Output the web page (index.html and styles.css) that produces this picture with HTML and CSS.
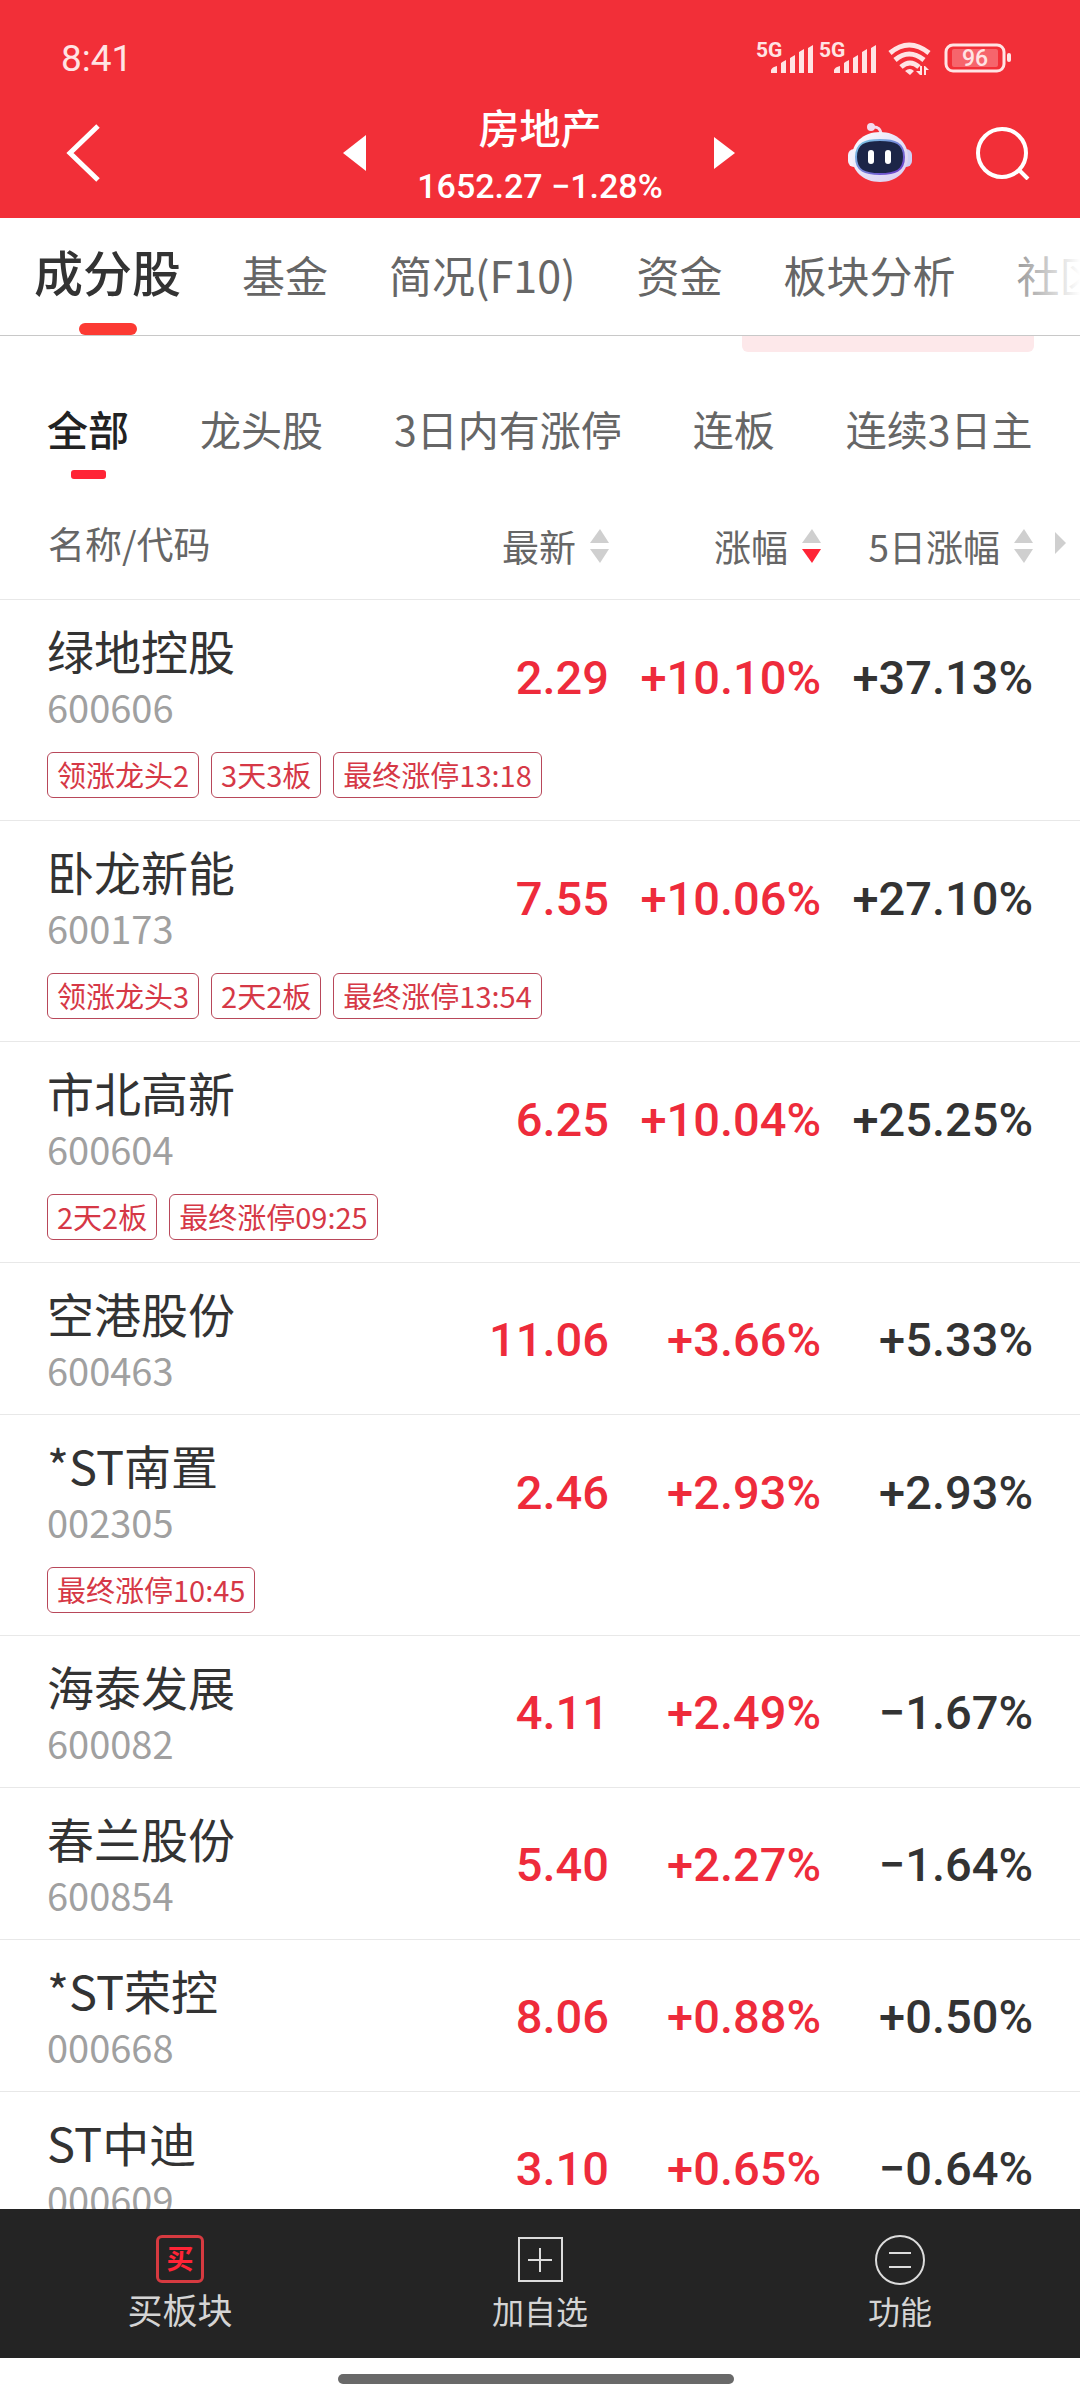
FILE: index.html
```html
<!DOCTYPE html>
<html lang="zh-CN">
<head>
    <meta charset="UTF-8">
    <meta name="viewport" content="width=device-width, initial-scale=1.0">
    <title>房地产</title>
    <link rel="stylesheet" href="styles.css">
</head>
<body>

    <header class="header">
        <div class="status-bar">
            <span class="time">8:41</span>
            <svg class="status-icons" width="256" height="44" viewBox="0 -4 256 44" fill="#ffe4e4">
                <!-- signal 1 -->
                <text class="network" x="0" y="17">5G</text>
                <path d="M15 33v-3q1-3 6-4v7zM25 33V23q1-1 5-3v13zM34 33V18l5-3v18zM43 33V12l5-3v24zM52 33V8l5-3v28z"/>
                <!-- signal 2 -->
                <text class="network" x="63" y="17">5G</text>
                <path d="M78 33v-3q1-3 6-4v7zM88 33V23q1-1 5-3v13zM97 33V18l5-3v18zM106 33V12l5-3v24zM115 33V8l5-3v28z"/>
                <!-- wifi -->
                <g fill="none" stroke="#ffe4e4" stroke-width="5">
                    <path d="M134 13q19-16 39 0"/>
                    <path d="M139 20q14-12 29 0"/>
                    <path d="M145 27q9-8 18 0"/>
                </g>
                <path d="M149 31q5-4 9 0l-4 4zM164 26h2v9h-2l-4-4h4zM168 35v-9h1l4 4h-3v5z"/>
                <!-- battery -->
                <rect x="190" y="5" width="58" height="26" rx="7" fill="none" stroke="#ffe4e4" stroke-width="3"/>
                <rect x="196" y="9" width="46" height="18" rx="2" fill-opacity="0.3"/>
                <rect x="251" y="13" width="4" height="9" rx="2"/>
                <text class="battery-level" x="219" y="26" text-anchor="middle">96</text>
            </svg>
        </div>
        <div class="toolbar">
            <button class="icon-btn back" type="button" aria-label="返回">
                <svg width="36" height="58" viewBox="0 0 36 58" fill="none" stroke="#fff" stroke-width="5">
                    <path d="M33 2L5 29l28 27"/>
                </svg>
            </button>
            <div class="switcher">
                <button class="icon-btn" type="button" aria-label="上一个">
                    <svg width="23" height="36" viewBox="0 0 23 36" fill="#fff"><path d="M23 0v36L0 18z"/></svg>
                </button>
                <div class="sector">
                    <h1>房地产</h1>
                    <p>1652.27 −1.28%</p>
                </div>
                <button class="icon-btn" type="button" aria-label="下一个">
                    <svg width="21" height="32" viewBox="0 0 21 32" fill="#fff"><path d="M0 0v32l21-16z"/></svg>
                </button>
            </div>
            <div class="actions">
                <button class="icon-btn" type="button" aria-label="智能助手">
                    <svg width="64" height="60" viewBox="0 0 64 60">
                        <defs>
                            <linearGradient id="shell" x1="0" y1="0" x2="1" y2="1">
                                <stop offset="0" stop-color="#fff"/>
                                <stop offset="0.5" stop-color="#e6e2f8"/>
                                <stop offset="1" stop-color="#d9cdf0"/>
                            </linearGradient>
                            <linearGradient id="rim" x1="0" y1="0" x2="1" y2="1">
                                <stop offset="0" stop-color="#7fd0e8"/>
                                <stop offset="1" stop-color="#6a35c8"/>
                            </linearGradient>
                        </defs>
                        <path d="M24 4q9-1 9 8" fill="none" stroke="#f3dcee" stroke-width="3"/>
                        <circle cx="23" cy="4" r="4" fill="#f3dcee"/>
                        <rect x="0" y="26" width="12" height="18" rx="6" fill="#f6f0fb"/>
                        <rect x="52" y="26" width="12" height="18" rx="6" fill="#cfd0f5"/>
                        <path d="M32 9c17 0 28 11 28 25S49 59 32 59 4 48 4 34 15 9 32 9z" fill="url(#shell)"/>
                        <path d="M32 17c15 0 24 3 24 17S47 51 32 51 8 48 8 34s9-17 24-17z" fill="#1c2547" stroke="url(#rim)" stroke-width="2"/>
                        <rect x="20" y="27" width="6" height="14" rx="3" fill="#fff"/>
                        <rect x="37" y="27" width="6" height="14" rx="3" fill="#fff"/>
                    </svg>
                </button>
                <button class="icon-btn" type="button" aria-label="搜索">
                    <svg width="54" height="54" viewBox="0 0 54 54" fill="none" stroke="#fff" stroke-width="4">
                        <circle cx="26" cy="27" r="24"/>
                        <path d="M42 43l10 10"/>
                    </svg>
                </button>
            </div>
        </div>
    </header>

    <nav class="tabs">
        <a class="active" href="#">成分股</a>
        <a href="#">基金</a>
        <a href="#">简况(F10)</a>
        <a href="#">资金</a>
        <a href="#">板块分析</a>
        <a href="#">社区</a>
    </nav>

    <main class="content">
        <div class="banner-edge"></div>

        <nav class="filters">
            <a class="active" href="#">全部</a>
            <a href="#">龙头股</a>
            <a href="#">3日内有涨停</a>
            <a href="#">连板</a>
            <a href="#">连续3日主</a>
        </nav>

        <table class="stocks">
            <colgroup>
                <col>
                <col class="col-price">
                <col class="col-change">
                <col class="col-change">
                <col class="col-more">
            </colgroup>
            <thead>
                <tr>
                    <th class="name">名称/代码</th>
                    <th>
                        <button class="sort" type="button">最新
                            <svg width="19" height="34" viewBox="0 0 19 34" fill="#cfcfcf"><path d="M0 14h19L10 0z"/><path d="M0 20h19l-9 14z"/></svg>
                        </button>
                    </th>
                    <th>
                        <button class="sort" type="button">涨幅
                            <svg width="19" height="34" viewBox="0 0 19 34" fill="#cfcfcf"><path d="M0 14h19L10 0z"/><path d="M0 20h19l-9 14z" fill="#ff2436"/></svg>
                        </button>
                    </th>
                    <th>
                        <button class="sort" type="button">5日涨幅
                            <svg width="19" height="34" viewBox="0 0 19 34" fill="#cfcfcf"><path d="M0 14h19L10 0z"/><path d="M0 20h19l-9 14z"/></svg>
                        </button>
                    </th>
                    <th class="more">
                        <svg width="11" height="22" viewBox="0 0 11 22" fill="#cfcfcf"><path d="M0 0v22l11-11z"/></svg>
                    </th>
                </tr>
            </thead>
            <tbody>
                <tr>
                    <td class="name"><strong>绿地控股</strong><small>600606</small></td>
                    <td class="up">2.29</td>
                    <td class="up">+10.10%</td>
                    <td>+37.13%</td>
                    <td></td>
                </tr>
                <tr class="tag-row">
                    <td colspan="5"><div class="tags"><span>领涨龙头2</span><span>3天3板</span><span>最终涨停13:18</span></div></td>
                </tr>
            </tbody>
            <tbody>
                <tr>
                    <td class="name"><strong>卧龙新能</strong><small>600173</small></td>
                    <td class="up">7.55</td>
                    <td class="up">+10.06%</td>
                    <td>+27.10%</td>
                    <td></td>
                </tr>
                <tr class="tag-row">
                    <td colspan="5"><div class="tags"><span>领涨龙头3</span><span>2天2板</span><span>最终涨停13:54</span></div></td>
                </tr>
            </tbody>
            <tbody>
                <tr>
                    <td class="name"><strong>市北高新</strong><small>600604</small></td>
                    <td class="up">6.25</td>
                    <td class="up">+10.04%</td>
                    <td>+25.25%</td>
                    <td></td>
                </tr>
                <tr class="tag-row">
                    <td colspan="5"><div class="tags"><span>2天2板</span><span>最终涨停09:25</span></div></td>
                </tr>
            </tbody>
            <tbody>
                <tr>
                    <td class="name"><strong>空港股份</strong><small>600463</small></td>
                    <td class="up">11.06</td>
                    <td class="up">+3.66%</td>
                    <td>+5.33%</td>
                    <td></td>
                </tr>
            </tbody>
            <tbody>
                <tr>
                    <td class="name"><strong>*ST南置</strong><small>002305</small></td>
                    <td class="up">2.46</td>
                    <td class="up">+2.93%</td>
                    <td>+2.93%</td>
                    <td></td>
                </tr>
                <tr class="tag-row">
                    <td colspan="5"><div class="tags"><span>最终涨停10:45</span></div></td>
                </tr>
            </tbody>
            <tbody>
                <tr>
                    <td class="name"><strong>海泰发展</strong><small>600082</small></td>
                    <td class="up">4.11</td>
                    <td class="up">+2.49%</td>
                    <td>−1.67%</td>
                    <td></td>
                </tr>
            </tbody>
            <tbody>
                <tr>
                    <td class="name"><strong>春兰股份</strong><small>600854</small></td>
                    <td class="up">5.40</td>
                    <td class="up">+2.27%</td>
                    <td>−1.64%</td>
                    <td></td>
                </tr>
            </tbody>
            <tbody>
                <tr>
                    <td class="name"><strong>*ST荣控</strong><small>000668</small></td>
                    <td class="up">8.06</td>
                    <td class="up">+0.88%</td>
                    <td>+0.50%</td>
                    <td></td>
                </tr>
            </tbody>
            <tbody>
                <tr>
                    <td class="name"><strong>ST中迪</strong><small>000609</small></td>
                    <td class="up">3.10</td>
                    <td class="up">+0.65%</td>
                    <td>−0.64%</td>
                    <td></td>
                </tr>
            </tbody>
        </table>
    </main>

    <footer class="bottom-bar">
        <button class="buy" type="button">
            <span class="buy-icon">买</span>
            买板块
        </button>
        <button type="button">
            <svg width="50" height="50" viewBox="0 0 50 50" fill="none" stroke="#dcdcdc" stroke-width="2">
                <rect x="4" y="3" width="43" height="43"/>
                <path d="M25 13v24M13 25h24"/>
            </svg>
            加自选
        </button>
        <button type="button">
            <svg width="50" height="50" viewBox="0 0 50 50" fill="none" stroke="#dcdcdc" stroke-width="2">
                <circle cx="25" cy="25" r="24"/>
                <path d="M14 18h22M14 32h22"/>
            </svg>
            功能
        </button>
    </footer>
    <div class="home-indicator"><span></span></div>

</body>
</html>
```
FILE: styles.css
```css
* {
    margin: 0;
    padding: 0;
    box-sizing: border-box;
}

body {
    font-family: 'Noto Sans CJK SC', sans-serif;
    display: flex;
    flex-direction: column;
    height: 100vh;
    overflow: hidden;
    background-color: #fff;
    color: #333;
}

a {
    color: inherit;
    text-decoration: none;
}

button {
    font-family: inherit;
    font-size: inherit;
    font-weight: inherit;
    color: inherit;
    background: none;
    border: none;
    cursor: pointer;
}

svg {
    display: block;
}

/* Header */
.header {
    background-color: #f22f38;
    color: #fff;
    flex-shrink: 0;
}

.status-bar {
    display: flex;
    justify-content: space-between;
    align-items: center;
    height: 88px;
    padding: 28px 68px 0 61px;
}

.time {
    font-family: Roboto, sans-serif;
    font-size: 37px;
    color: #ffe4e4;
}

.network {
    font-family: Roboto, sans-serif;
    font-size: 21px;
    font-weight: 700;
}

.battery-level {
    font-family: Roboto, sans-serif;
    font-size: 23px;
    font-weight: 500;
}

.toolbar {
    display: grid;
    grid-template-columns: 1fr 392px 1fr;
    align-items: center;
    height: 130px;
    padding: 0 50px 0 48px;
}

.back {
    justify-self: start;
    padding-left: 17px;
}

.switcher {
    display: flex;
    justify-content: space-between;
    align-items: center;
}

.sector {
    padding-top: 6px;
    text-align: center;
    line-height: 60px;
}

.sector h1 {
    font-size: 41px;
    font-weight: 500;
}

.sector p {
    font-family: Roboto, sans-serif;
    font-size: 34px;
    font-weight: 500;
}

.actions {
    display: flex;
    justify-content: flex-end;
    align-items: center;
    gap: 64px;
}

/* Tabs */
.tabs {
    display: flex;
    flex-shrink: 0;
    gap: 61px;
    height: 118px;
    padding-left: 34px;
    border-bottom: 1px solid #c8c8c8;
    font-size: 43px;
    line-height: 112px;
    color: #666;
    white-space: nowrap;
    overflow: hidden;
    position: relative;
}

.tabs::after {
    content: "";
    position: absolute;
    top: 0;
    right: 0;
    width: 96px;
    height: 100%;
    background: linear-gradient(to right, rgba(255, 255, 255, 0), #fff);
}

.tabs a,
.filters a {
    display: flex;
    flex-direction: column;
    align-items: center;
    justify-content: space-between;
    flex-shrink: 0;
}

.tabs .active {
    font-size: 49px;
    font-weight: 500;
    line-height: 105px;
    color: #333;
}

.tabs .active::after {
    content: "";
    width: 58px;
    height: 12px;
    border-radius: 6px;
    background-color: #fc3a33;
}

/* Content */
.content {
    flex: 1;
    min-height: 0;
    overflow: hidden;
}

.banner-edge {
    width: 27%;
    height: 16px;
    margin: 0 46px 0 auto;
    border-radius: 0 0 6px 6px;
    background-color: #fde8ea;
}

.filters {
    display: flex;
    gap: 71px;
    height: 138px;
    margin: 0 46px 0 47px;
    padding: 42px 0 11px;
    font-size: 41px;
    line-height: 68px;
    color: #666;
    white-space: nowrap;
    overflow: hidden;
}

.filters .active {
    font-weight: 500;
    color: #222;
}

.filters .active::after {
    content: "";
    width: 35px;
    height: 9px;
    border-radius: 3px;
    background-color: #ff2436;
}

/* Stock table */
.stocks {
    width: 100%;
    table-layout: fixed;
    border-collapse: separate;
    border-spacing: 0;
}

.col-price {
    width: 212px;
}

.col-change {
    width: 212px;
}

.col-more {
    width: 47px;
}

.stocks th {
    height: 110px;
    padding-bottom: 3px;
    font-size: 37px;
    font-weight: 400;
    color: #666;
    text-align: right;
    white-space: nowrap;
    border-bottom: 1px solid #e8e8e8;
}

.stocks th.name {
    padding-left: 48px;
    text-align: left;
}

.stocks th.more {
    padding-left: 22px;
}

.sort {
    display: inline-flex;
    align-items: center;
    gap: 14px;
    vertical-align: middle;
}

.stocks td {
    height: 152px;
    padding-top: 2px;
    font-family: Roboto, sans-serif;
    font-size: 47px;
    font-weight: 500;
    text-align: right;
    white-space: nowrap;
}

.stocks tbody tr:last-child td {
    border-bottom: 1px solid #e8e8e8;
}

.stocks td.up {
    color: #ee2b3b;
}

.stocks td.name {
    padding-top: 4px;
    padding-left: 47px;
    font-family: 'Noto Sans CJK SC', sans-serif;
    text-align: left;
}

.name strong,
.name small {
    display: block;
    font-weight: 400;
    line-height: 57px;
}

.name strong {
    font-size: 47px;
}

.name small {
    font-size: 38px;
    color: #a0a0a0;
}

.stocks .tag-row td {
    height: 69px;
    padding-top: 0;
    padding-left: 47px;
    vertical-align: top;
}

.tags {
    display: flex;
    gap: 12px;
}

.tags span {
    height: 46px;
    padding: 0 9px;
    border: 1px solid #b8485a;
    border-radius: 6px;
    font-family: 'Noto Sans CJK SC', sans-serif;
    font-size: 29px;
    font-weight: 400;
    line-height: 42px;
    color: #d63846;
}

/* Bottom bar */
.bottom-bar {
    display: grid;
    grid-template-columns: repeat(3, 1fr);
    flex-shrink: 0;
    height: 149px;
    background-color: #242424;
}

.bottom-bar button {
    display: flex;
    flex-direction: column;
    align-items: center;
    padding-top: 26px;
    font-size: 32px;
    line-height: 50px;
    color: #d4d4d4;
}

.bottom-bar .buy {
    font-size: 35px;
}

.buy-icon {
    width: 48px;
    height: 48px;
    margin-bottom: 1px;
    border: 3px solid #d63a40;
    border-radius: 6px;
    font-size: 27px;
    font-weight: 700;
    line-height: 39px;
    color: #ff2436;
}

.home-indicator {
    display: flex;
    justify-content: center;
    align-items: center;
    flex-shrink: 0;
    height: 42px;
    padding-right: 8px;
}

.home-indicator span {
    width: 37%;
    height: 10px;
    border-radius: 5px;
    background-color: #696969;
}
```
